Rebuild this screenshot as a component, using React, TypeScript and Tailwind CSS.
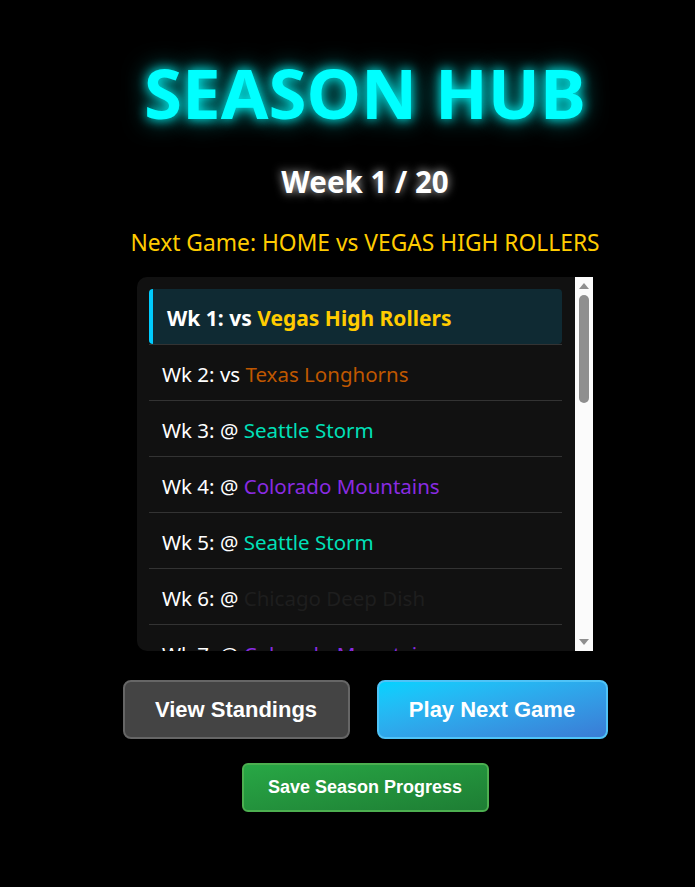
import React from "react";

const schedule = [
  { wk: 1, loc: "vs", team: "Vegas High Rollers", color: "text-[#ffcc00]" },
  { wk: 2, loc: "vs", team: "Texas Longhorns", color: "text-[#bf5700]" },
  { wk: 3, loc: "@", team: "Seattle Storm", color: "text-[#00e0b8]" },
  { wk: 4, loc: "@", team: "Colorado Mountains", color: "text-[#8a2be2]" },
  { wk: 5, loc: "@", team: "Seattle Storm", color: "text-[#00e0b8]" },
  { wk: 6, loc: "@", team: "Chicago Deep Dish", color: "text-[#1e1e1e]" },
  { wk: 7, loc: "@", team: "Colorado Mountains", color: "text-[#8a2be2]" },
  { wk: 8, loc: "vs", team: "Texas Longhorns", color: "text-[#bf5700]" },
  { wk: 9, loc: "vs", team: "Seattle Storm", color: "text-[#00e0b8]" },
  { wk: 10, loc: "@", team: "Vegas High Rollers", color: "text-[#ffcc00]" },
];

export default function App() {
  return (
    <div className="min-h-screen bg-black font-['Noto_Sans','Open_Sans',sans-serif] text-white">
      <div className="flex flex-col items-center pl-[35px] pt-[47px]">
        <h1 className="text-[69px] font-bold leading-[90px] text-[#00ffff] [text-shadow:0_0_12px_#00ffff,0_0_24px_rgba(0,255,255,0.6)]">
          SEASON HUB
        </h1>

        <h2 className="mt-[27px] text-[29.5px] font-bold leading-[36px] [text-shadow:0_0_10px_rgba(255,255,255,0.8)]">
          Week 1 / 20
        </h2>

        <p className="mt-[29px] text-[22.8px] leading-[28px] text-[#ffcc00]">
          Next Game: HOME vs VEGAS HIGH ROLLERS
        </p>

        {/* schedule list + classic scrollbar */}
        <div className="mt-[20px] flex h-[374px] w-[456px] overflow-hidden rounded-l-[10px] bg-[#111111]">
          <div className="flex-1 overflow-hidden p-3 pr-[13px]">
            {schedule.map((g, i) =>
              i === 0 ? (
                <div
                  key={g.wk}
                  className="flex h-[55px] items-center rounded-[4px] border-l-4 border-[#00ccff] bg-[#0f2a33] pl-[14px] pt-[4px] text-[21px] font-bold"
                >
                  <span>Wk {g.wk}: {g.loc}&nbsp;</span>
                  <span className={g.color}>{g.team}</span>
                </div>
              ) : (
                <div
                  key={g.wk}
                  className="flex h-[56px] items-center border-t border-[#333333] pl-[13px] pt-[4px] text-[20.5px]"
                >
                  <span>Wk {g.wk}: {g.loc}&nbsp;</span>
                  <span className={g.color}>{g.team}</span>
                </div>
              )
            )}
          </div>
          <div className="flex w-[18px] flex-col items-center bg-[#fbfbfb] py-[4px]">
            <svg width="12" height="8" viewBox="0 0 12 8" className="mb-[5px] mt-[1px]">
              <path d="M6 1 L11 7 L1 7 Z" fill="#8f8f8f" />
            </svg>
            <div className="h-[108px] w-[10px] rounded-full bg-[#8f8f8f]" />
            <div className="flex-1" />
            <svg width="12" height="8" viewBox="0 0 12 8" className="mb-[1px]">
              <path d="M1 1 L11 1 L6 7 Z" fill="#8f8f8f" />
            </svg>
          </div>
        </div>

        <div className="mt-[29px] flex gap-[27px] font-['Liberation_Sans',Arial,sans-serif]">
          <button className="h-[59px] w-[227px] rounded-[8px] border-2 border-[#666666] bg-[#444444] text-[22px] font-bold text-white">
            View Standings
          </button>
          <button className="h-[59px] w-[231px] rounded-[8px] border-2 border-[#4fc3f7] bg-gradient-to-br from-[#00d2ff] to-[#3a7bd5] text-[22px] font-bold text-white">
            Play Next Game
          </button>
        </div>

        <button className="mt-[24px] h-[49px] w-[247px] rounded-[6px] border-2 border-[#4caf50] bg-gradient-to-br from-[#28a745] to-[#1e7e34] font-['Liberation_Sans',Arial,sans-serif] text-[18px] font-bold text-white">
          Save Season Progress
        </button>
      </div>
    </div>
  );
}
